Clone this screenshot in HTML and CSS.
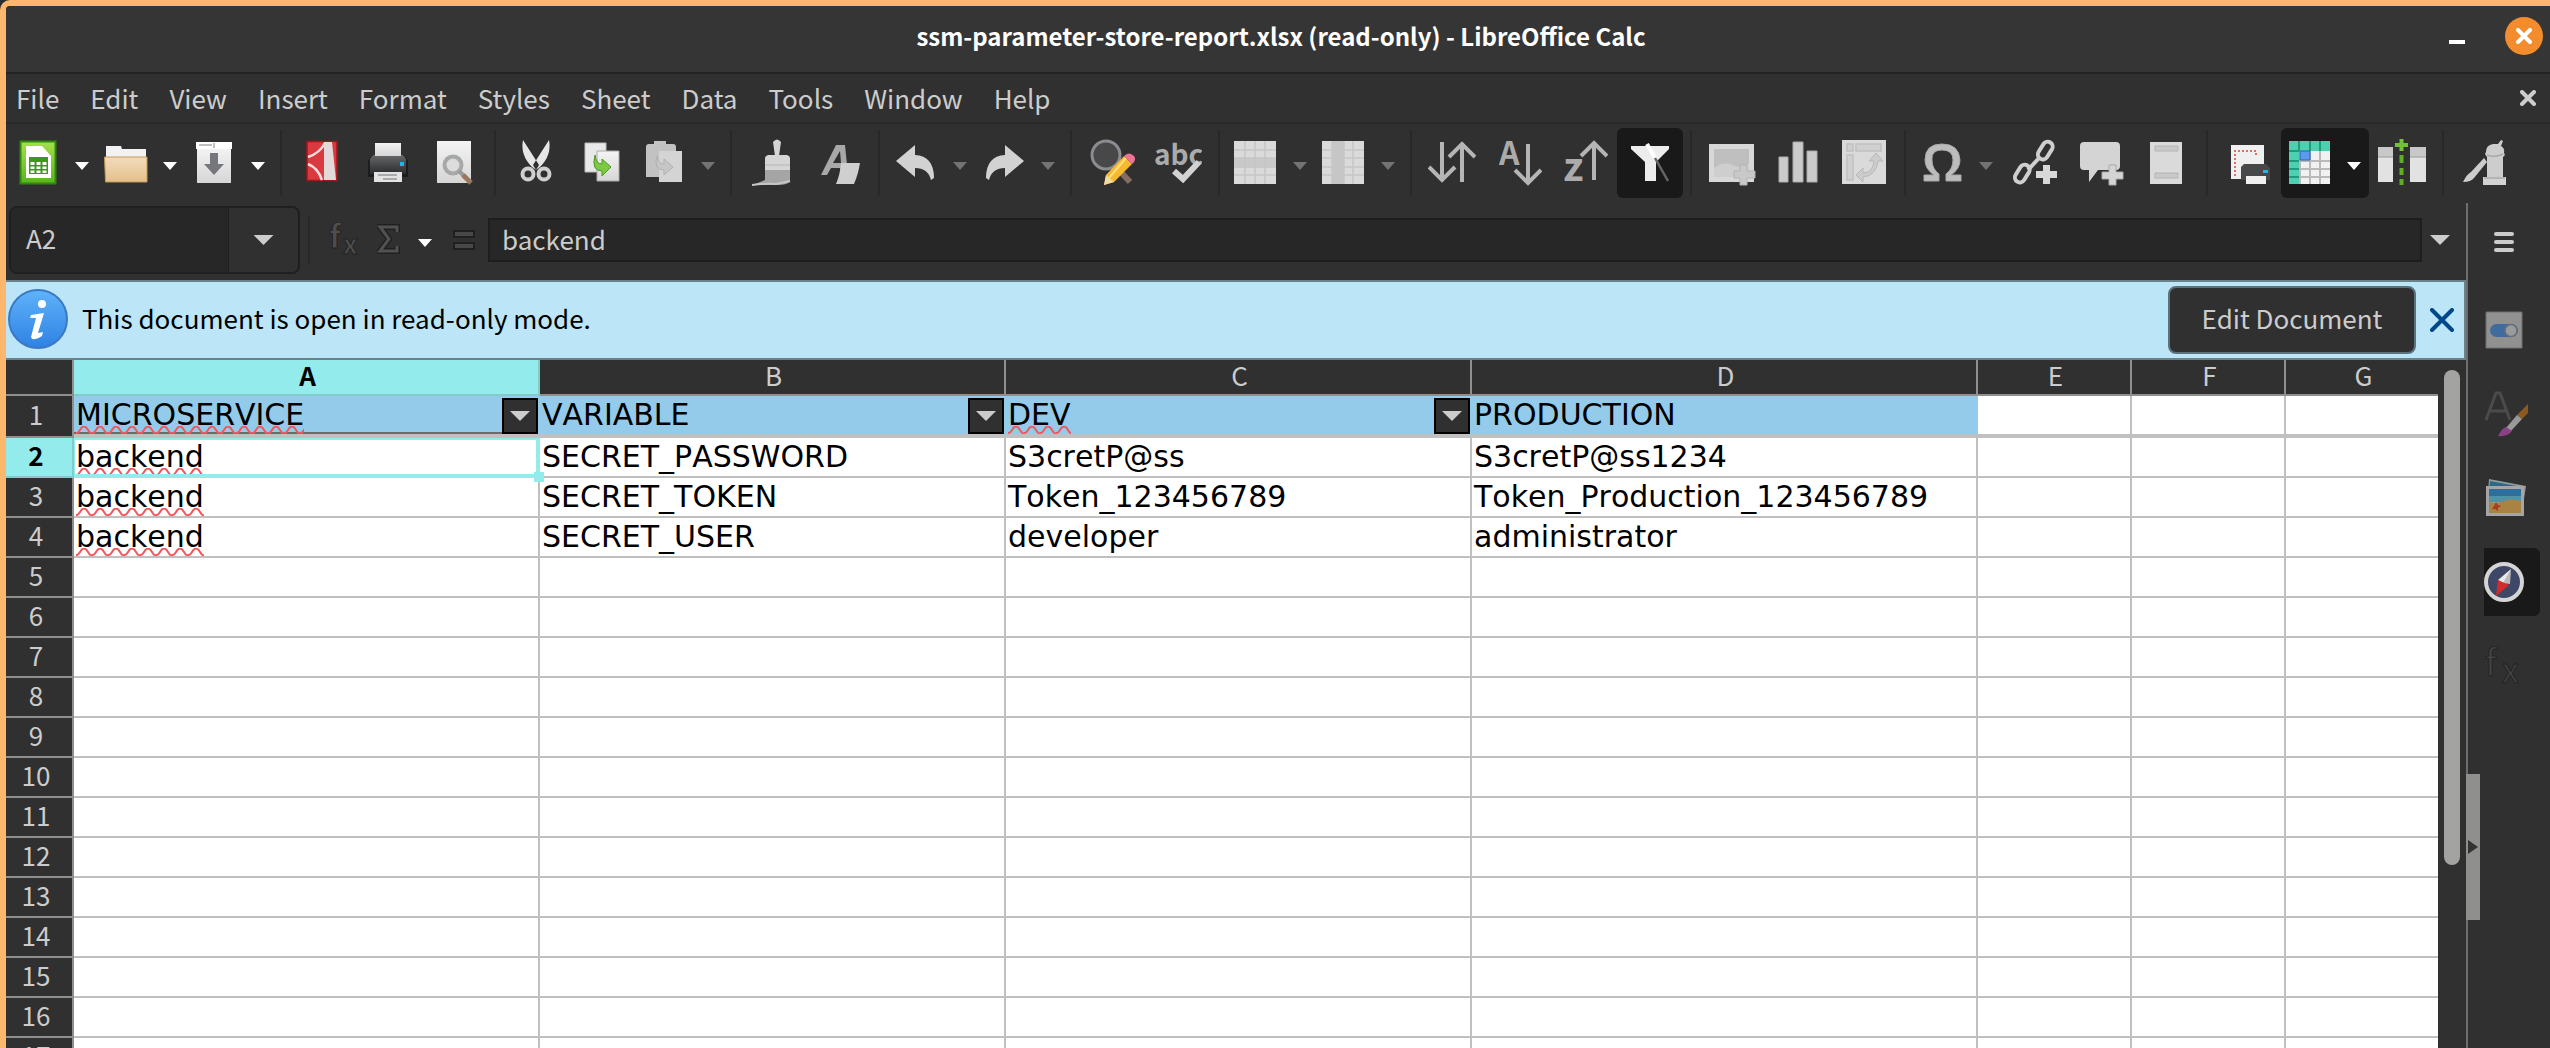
FILE: index.html
```html
<!DOCTYPE html>
<html lang="en">
<head>
<meta charset="utf-8">
<title>ssm-parameter-store-report.xlsx (read-only) - LibreOffice Calc</title>
<link rel="stylesheet" href="styles.css">
</head>
<body>
<svg class="defs" width="0" height="0" aria-hidden="true">
  <defs>
    <linearGradient id="paper" x1="0" y1="0" x2="0" y2="1"><stop offset="0" stop-color="#f4f4f4"/><stop offset="1" stop-color="#d6d6d6"/></linearGradient>
    <linearGradient id="green" x1="0" y1="0" x2="0" y2="1"><stop offset="0" stop-color="#a5e04c"/><stop offset="1" stop-color="#57b51c"/></linearGradient>
    <linearGradient id="tan" x1="0" y1="0" x2="0" y2="1"><stop offset="0" stop-color="#f2dcbc"/><stop offset="1" stop-color="#e4c08b"/></linearGradient>
    <linearGradient id="blue" x1="0" y1="0" x2="0" y2="1"><stop offset="0" stop-color="#5fb2fb"/><stop offset="1" stop-color="#2f82e2"/></linearGradient>
    <linearGradient id="dark" x1="0" y1="0" x2="0" y2="1"><stop offset="0" stop-color="#66686a"/><stop offset="1" stop-color="#2a2b2c"/></linearGradient>
  </defs>
</svg>
<div class="window">
  <header class="titlebar">
    <h1>ssm-parameter-store-report.xlsx (read-only) - LibreOffice Calc</h1>
    <div class="window-buttons">
      <button class="minimize" aria-label="Minimize"><svg width="16" height="20"><path d="M0 14H16V18H0z" fill="#fff"/></svg></button>
      <button class="close" aria-label="Close"><svg width="16" height="16"><path d="M2 2 14 14M14 2 2 14" stroke="#fff" stroke-width="4" stroke-linecap="round"/></svg></button>
    </div>
  </header>

  <nav class="menubar">
    <button>File</button><button>Edit</button><button>View</button><button>Insert</button><button>Format</button><button>Styles</button><button>Sheet</button><button>Data</button><button>Tools</button><button>Window</button><button>Help</button>
    <button class="close-doc" aria-label="Close document"><svg width="16" height="16"><path d="M2 2 14 14M14 2 2 14" stroke="#ccc" stroke-width="4" stroke-linecap="round"/></svg></button>
  </nav>

  <div class="toolbar" role="toolbar" aria-label="Standard">
    <div class="split"><button class="tool" aria-label="New"><svg viewBox="0 0 48 48"><path d="M6.500 2.500H41.500V44.500H6.500z" fill="url(#green)" stroke="#2f8a0c" stroke-width="2"/><path d="M12 7H28L37 17V39H12z" fill="#fff"/><path d="M15 18H34V35H15z" fill="#3a9a18"/><path d="M16.500 23H20.500V26H16.500zM22.500 23H26.500V26H22.500zM28.500 23H32.500V26H28.500zM16.500 27.500H20.500V30H16.500zM22.500 27.500H26.500V30H22.500zM28.500 27.500H32.500V30H28.500zM16.500 31.500H20.500V34H16.500zM22.500 31.500H26.500V34H22.500zM28.500 31.500H32.500V34H28.500z" fill="#fff"/></svg></button><button class="drop" aria-label="New options"></button></div>
    <div class="split"><button class="tool" aria-label="Open"><svg viewBox="0 0 48 48"><path d="M4 7H19L20 10H44V22H4z" fill="#f2f2f4"/><path d="M2.500 18H45V43H3.500z" fill="url(#tan)" stroke="#c29858"/></svg></button><button class="drop" aria-label="Open options"></button></div>
    <div class="split"><button class="tool" aria-label="Save"><svg viewBox="0 0 48 48"><path d="M7 8H41V44H7z" fill="url(#paper)"/><path d="M6 3H42V10H6z" fill="#fff"/><path d="M9 6H22M24 4V9" stroke="#aaa" stroke-width="1.500"/><path d="M20 14H28V25H34L24 36 14 25H20z" fill="#75777d"/></svg></button><button class="drop" aria-label="Save options"></button></div>
    <i class="sep"></i>
    <button class="tool" aria-label="Export as PDF"><svg viewBox="0 0 48 48"><path d="M9 2.500H39V41.500H9z" fill="#d93a40" stroke="#a3151b" stroke-width="1.500"/><path d="M26 3H34L38 41H26z" fill="#e4d9d9"/><path d="M10 18Q22 14 27 4M10 25Q20 29 24 41" fill="none" stroke="#f4dcdc" stroke-width="2.500"/></svg></button>
    <button class="tool" aria-label="Print"><svg viewBox="0 0 48 48"><path d="M4 22 8 16H40L44 22V38H4z" fill="#1c1d1e"/><path d="M6 20 9 16H39L42 20V35H6z" fill="url(#dark)"/><path d="M11 4H37V17H11z" fill="url(#paper)"/><path d="M10 33H38V43H10z" fill="#e3e3e3"/><path d="M14 36H33M19 40H33" stroke="#aaa" stroke-width="2"/><path d="M36 23H40V27H36z" fill="#1bb4f5"/></svg></button>
    <button class="tool" aria-label="Print preview"><svg viewBox="0 0 48 48"><path d="M7 2H41V44H7z" fill="url(#paper)"/><circle cx="23" cy="26" r="8.500" fill="#dcdcdc" stroke="#a6a8aa" stroke-width="4"/><path d="M29 32 34 37" stroke="#9a9a9a" stroke-width="4"/><path d="M33 36 41 44" stroke="#9b7761" stroke-width="5"/></svg></button>
    <i class="sep"></i>
    <button class="tool" aria-label="Cut"><svg viewBox="0 0 48 48"><path d="M11 1 27 26 24 31 20 28Q8 16 11 1zM37 1 21 26 24 31 28 28Q40 16 37 1z" fill="#e6e6e6"/><circle cx="16" cy="35" r="5.500" fill="none" stroke="#cfcfcf" stroke-width="4"/><circle cx="32" cy="35" r="5.500" fill="none" stroke="#cfcfcf" stroke-width="4"/></svg></button>
    <button class="tool" aria-label="Copy"><svg viewBox="0 0 48 48"><path d="M7 4H28V33H7z" fill="#e8e8e8" stroke="#bbb"/><path d="M19 12H41V42H19z" fill="url(#paper)" stroke="#aaa"/><path d="M17 16Q13 32 24 32V37L33 28 24 20V25Q18 25 17 16z" fill="#7ec944" stroke="#4f9a22"/></svg></button>
    <div class="split"><button class="tool" aria-label="Paste"><svg viewBox="0 0 48 48"><path d="M6 8Q6 5 9 5H14V2H26V5H33Q36 5 36 8V38H6z" fill="#c2c2c2"/><path d="M19 12H42V43H19z" fill="#d4d4d4"/><path d="M17 17Q13 31 24 31V36L33 28 24 20V25Q18 25 17 17z" fill="#c6c6c6" stroke="#b0b0b0"/></svg></button><button class="drop off" aria-label="Paste options"></button></div>
    <i class="sep"></i>
    <button class="tool" aria-label="Clone formatting"><svg viewBox="0 0 48 48"><path d="M25 3Q29-2 33 3L31 17H27zM17 19Q17 17 20 16H39Q42 17 42 19V31H17z" fill="#d5d5d5"/><path d="M17 31H42V43Q38 46 30 46H4Q12 43 17 41z" fill="#a5a5a5"/><path d="M17 26H42M4 46Q20 44 28 45L42 42" stroke="#c6c6c6" stroke-width="2" fill="none"/></svg></button>
    <button class="tool" aria-label="Clear formatting"><svg viewBox="0 0 48 48"><path d="M7 36 22 6H31L34 36H27L26 29H17L13 36zM19 24H27L26 12z" fill="#a8a8a8" fill-rule="evenodd"/><path d="M27 24H46Q44 36 40 45H22Q26 36 27 24z" fill="#cfcfcf"/></svg></button>
    <i class="sep"></i>
    <div class="split"><button class="tool" aria-label="Undo"><svg viewBox="0 0 48 48"><path d="M4 22 23 6V16Q42 17 42 39L39 41Q36 29 23 29V38z" fill="#d2d2d2"/></svg></button><button class="drop off" aria-label="Undo options"></button></div>
    <div class="split"><button class="tool" aria-label="Redo"><svg viewBox="0 0 48 48"><path d="M44 22 25 6V16Q6 17 6 39L9 41Q12 29 25 29V38z" fill="#d2d2d2"/></svg></button><button class="drop off" aria-label="Redo options"></button></div>
    <i class="sep"></i>
    <button class="tool" aria-label="Find and replace"><svg viewBox="0 0 48 48"><path d="M31 31 42 43" stroke="#846c60" stroke-width="6"/><circle cx="18" cy="16" r="14" fill="#484848" stroke="#8b8b92" stroke-width="3"/><path d="M36 17 44 25 26 43 16 46 18 36z" fill="#f7b92f"/><path d="M38 19 21 39" stroke="#ffe07c" stroke-width="2"/><path d="M36 17Q41 12 46 17 49 21 44 25z" fill="#ee7396"/><path d="M18 36 26 43 16 46z" fill="#f4d9a0"/></svg></button>
    <button class="tool" aria-label="Spelling"><svg viewBox="0 0 48 48"><text x="0" y="26" class="glyph abc">abc</text><path d="M20 32 29 40 45 23" fill="none" stroke="#d2d2d2" stroke-width="6"/></svg></button>
    <i class="sep"></i>
    <div class="split"><button class="tool" aria-label="Row"><svg viewBox="0 0 48 48"><path d="M2 2H44V45H2z" fill="#dadada"/><path d="M2 19H44V28H2z" fill="#c9c9c9"/><path d="M13 2V45M23 2V45M33 2V45M2 11H44M2 19H44M2 28H44M2 36H44" stroke="#c6c6c6" stroke-width="1.500"/></svg></button><button class="drop off" aria-label="Row options"></button></div>
    <div class="split"><button class="tool" aria-label="Column"><svg viewBox="0 0 48 48"><path d="M2 2H44V45H2z" fill="#dadada"/><path d="M12 2H24V45H12z" fill="#c6c6c6"/><path d="M12 2V45M24 2V45M33 2V45M2 11H44M2 19H44M2 28H44M2 36H44" stroke="#c6c6c6" stroke-width="1.500"/></svg></button><button class="drop off" aria-label="Column options"></button></div>
    <i class="sep"></i>
    <button class="tool" aria-label="Sort"><svg viewBox="0 0 48 48"><path d="M14 3V40M1 28 14 41 27 28M34 43V5M21 18 34 5 47 18" class="arrow"/></svg></button>
    <button class="tool" aria-label="Sort ascending"><svg viewBox="0 0 48 48"><text x="5" y="26" class="glyph letter">A</text><path d="M34 5V43M21 31 34 44 47 31" class="arrow"/></svg></button>
    <button class="tool" aria-label="Sort descending"><svg viewBox="0 0 48 48"><text x="3" y="42" class="glyph small-z">z</text><path d="M34 41V3M21 17 34 4 47 17" class="arrow"/></svg></button>
    <button class="tool active" aria-label="AutoFilter" aria-pressed="true"><svg viewBox="0 0 48 48"><path d="M5 7H43V10L30 23V42H19V23L5 10z" fill="#ececec"/><path d="M21 5 29 19" stroke="#fff" stroke-width="4"/><path d="M29 19 42 42" stroke="#666" stroke-width="2.500"/></svg></button>
    <i class="sep"></i>
    <button class="tool" aria-label="Insert image"><svg viewBox="0 0 48 48"><path d="M1 5H46V43H1z" fill="#d8d8d8"/><path d="M6 10H41V38H6z" fill="#bfbfbf"/><path d="M6 29Q16 22 24 26T41 25V38H6z" fill="#cecece"/><path d="M32 26H39V32H47V39H39V46H32V39H26V32H32z" fill="#c9c9c9" stroke="#b3b3b3"/></svg></button>
    <button class="tool" aria-label="Insert chart"><svg viewBox="0 0 48 48"><path d="M5 18H14V43H5zM19 3H29V43H19zM33 12H43V43H33z" fill="#cbcbcb" stroke="#aaa"/></svg></button>
    <button class="tool" aria-label="Pivot table"><svg viewBox="0 0 48 48"><path d="M2 1H46V45H2z" fill="#dadada"/><path d="M7 5H13V12H7zM16 5H41V12H16zM7 16H13V41H7z" fill="#d0d0d0" stroke="#c0c0c0" stroke-width="1.500"/><path d="M16 36 23 29V34Q33 34 34 22H29L36 14 43 22H38Q36 37 23 38V43z" fill="#cccccc" stroke="#b8b8b8"/></svg></button>
    <i class="sep"></i>
    <div class="split"><button class="tool" aria-label="Special character"><svg viewBox="0 0 48 48"><path d="M6 42V36H16Q7 30 7 21 7 5 24 5T42 21Q42 30 33 36H43V42H28V35Q35 30 35 21 35 11 24 11T14 21Q14 30 21 35V42z" fill="#bcbcbc" stroke="#a8a8a8"/></svg></button><button class="drop off" aria-label="Special character options"></button></div>
    <button class="tool" aria-label="Insert hyperlink"><svg viewBox="0 0 48 48"><g fill="none" stroke="#cfcfcf" stroke-width="4"><rect x="30" y="2" width="10" height="19" rx="5" transform="rotate(32 35 12)"/><rect x="7" y="25" width="10" height="19" rx="5" transform="rotate(32 12 35)"/><path d="M18 31 30 18"/></g><path d="M33 26H40V32H47V39H40V45H33V39H26V32H33z" fill="#d8d8d8"/></svg></button>
    <button class="tool" aria-label="Insert comment"><svg viewBox="0 0 48 48"><path d="M8 3H40Q44 3 44 7V27Q44 31 40 31H22L13 43V31H8Q4 31 4 27V7Q4 3 8 3z" fill="#d4d4d4"/><path d="M33 26H40V33H47V40H40V46H33V40H26V33H33z" fill="#d4d4d4" stroke="#aaa"/></svg></button>
    <button class="tool" aria-label="Headers and footers"><svg viewBox="0 0 48 48"><path d="M8 3H40V45H8z" fill="#dadada"/><path d="M13 7H36V12H13zM13 34H36V39H13z" fill="#c9c9c9" stroke="#b4b4b4"/></svg></button>
    <i class="sep"></i>
    <button class="tool" aria-label="Define print area"><svg viewBox="0 0 48 48"><path d="M7 6H40V40H7z" fill="#f0f0f0"/><path d="M11 37V12H32V16" fill="none" stroke="#e56a6a" stroke-width="2" stroke-dasharray="2 2"/><path d="M20 25H42L46 29V41H17V28z" fill="#46484a"/><path d="M24 17H40V25H24zM22 37H42V45H22z" fill="#f0f0f0"/><path d="M39 31H44V34H39z" fill="#1bb4f5"/></svg></button>
    <div class="split active"><button class="tool" aria-label="Freeze rows and columns" aria-pressed="true"><svg viewBox="0 0 48 48"><path d="M3 2H44V45H3z" fill="#f1f1f1"/><path d="M14 12V45M24 12V45M34 12V45M13 22H44M13 30H44M13 38H44" stroke="#b9b9b9" stroke-width="2"/><path d="M3 2H44V12H13V45H3z" fill="#4cd0b0"/><path d="M13 2V12M24 2V12M34 2V12M3 12H13M3 22H13M3 30H13M3 38H13" stroke="#229a7e" stroke-width="2"/><path d="M14 12H24V21H14z" fill="#5b9bee" stroke="#2c61b4"/></svg></button><button class="drop" aria-label="Freeze options"></button></div>
    <button class="tool" aria-label="Split window"><svg viewBox="0 0 48 48"><path d="M0 8H15V43H0zM32 8H48V43H32z" fill="#e2e2e2"/><path d="M0 8H15V18H0zM32 8H48V18H32z" fill="#c8c8c8"/><path d="M0 18H15M32 18H48" stroke="#9c9c9c"/><path d="M23.500 0V12M17 6H30" stroke="#73c233" stroke-width="4"/><path d="M23.500 16V24M23.500 29V36M23.500 40V46" stroke="#5fb024" stroke-width="4"/></svg></button>
    <i class="sep"></i>
    <button class="tool" aria-label="Show draw functions"><svg viewBox="0 0 48 48"><path d="M26 13Q26 6 33 5L38 5 41 1 43 2 41 7Q45 9 44 14 46 16 43 18V38H27V18Q24 15 26 13z" fill="#cdcdcd"/><path d="M24 19 27 23 14 39Q11 43 3 43 7 35 11 33z" fill="#cdcdcd"/><path d="M23 38H46V46H23z" fill="#d2d2d2"/><path d="M27 16Q35 19 43 15M24 39H45" fill="none" stroke="#aaa" stroke-width="1.500"/></svg></button>
  </div>

  <div class="workspace">
    <main class="document">
      <div class="formula-bar">
        <div class="name-box"><input type="text" value="A2" aria-label="Name box"><button aria-label="Choose name"><i class="down"></i></button></div>
        <i class="rule"></i>
        <button class="fn wizard" aria-label="Function wizard"><svg width="32" height="36"><text x="1" y="26" class="fx">f</text><text x="15" y="32" class="fx sub">x</text></svg></button>
        <button class="fn sum" aria-label="Select function"><svg width="24" height="36"><path d="M20 10V5H3L12 17 3 29H20V24" fill="none" stroke="#202020" stroke-width="6"/><path d="M20 10V5H3L12 17 3 29H20V24" fill="none" stroke="#515151" stroke-width="3"/></svg></button>
        <button class="drop" aria-label="Function options"></button>
        <button class="fn equals" aria-label="Formula"><svg width="22" height="22"><path d="M1 2H21V8H1zM1 14H21V20H1z" fill="#484848" stroke="#202020" stroke-width="2"/></svg></button>
        <input class="formula" type="text" value="backend" aria-label="Input line">
        <button class="expand" aria-label="Expand formula bar"><i class="down"></i></button>
      </div>

      <div class="infobar" role="status">
        <svg class="info" viewBox="0 0 60 62"><ellipse cx="30" cy="30" rx="29" ry="29" fill="url(#blue)" stroke="#3b79c4" stroke-width="2"/><circle cx="34" cy="15" r="4" fill="#fff"/><path d="M23 26 36 24 30 44 35 43 34 47Q24 53 23 48L28 29 22 29z" fill="#fff"/></svg>
        <p>This document is open in read-only mode.</p>
        <button class="edit">Edit Document</button>
        <button class="dismiss" aria-label="Close infobar"><svg width="24" height="24"><path d="M2 2 22 22M22 2 2 22" stroke="#00488c" stroke-width="4" stroke-linecap="round"/></svg></button>
      </div>

      <div class="grid">
        <div class="sheet">
          <table>
            <colgroup><col class="w-num"><col class="w-wide"><col class="w-wide"><col class="w-wide"><col class="w-prod"><col class="w-std"><col class="w-std"><col class="w-std"></colgroup>
            <thead>
              <tr><th></th><th class="current">A</th><th>B</th><th>C</th><th>D</th><th>E</th><th>F</th><th>G</th></tr>
            </thead>
            <tbody>
              <tr class="heading"><th>1</th><td class="selected-col"><span class="typo">MICROSERVICE</span><button class="filter" aria-label="Filter MICROSERVICE"></button></td><td>VARIABLE<button class="filter" aria-label="Filter VARIABLE"></button></td><td><span class="typo">DEV</span><button class="filter" aria-label="Filter DEV"></button></td><td>PRODUCTION</td><td></td><td></td><td></td></tr>
              <tr><th class="current">2</th><td class="cursor"><span class="typo">backend</span></td><td>SECRET_PASSWORD</td><td>S3cretP@ss</td><td>S3cretP@ss1234</td><td></td><td></td><td></td></tr>
              <tr><th>3</th><td><span class="typo">backend</span></td><td>SECRET_TOKEN</td><td>Token_123456789</td><td>Token_Production_123456789</td><td></td><td></td><td></td></tr>
              <tr><th>4</th><td><span class="typo">backend</span></td><td>SECRET_USER</td><td>developer</td><td>administrator</td><td></td><td></td><td></td></tr>
              <tr><th>5</th><td></td><td></td><td></td><td></td><td></td><td></td><td></td></tr>
              <tr><th>6</th><td></td><td></td><td></td><td></td><td></td><td></td><td></td></tr>
              <tr><th>7</th><td></td><td></td><td></td><td></td><td></td><td></td><td></td></tr>
              <tr><th>8</th><td></td><td></td><td></td><td></td><td></td><td></td><td></td></tr>
              <tr><th>9</th><td></td><td></td><td></td><td></td><td></td><td></td><td></td></tr>
              <tr><th>10</th><td></td><td></td><td></td><td></td><td></td><td></td><td></td></tr>
              <tr><th>11</th><td></td><td></td><td></td><td></td><td></td><td></td><td></td></tr>
              <tr><th>12</th><td></td><td></td><td></td><td></td><td></td><td></td><td></td></tr>
              <tr><th>13</th><td></td><td></td><td></td><td></td><td></td><td></td><td></td></tr>
              <tr><th>14</th><td></td><td></td><td></td><td></td><td></td><td></td><td></td></tr>
              <tr><th>15</th><td></td><td></td><td></td><td></td><td></td><td></td><td></td></tr>
              <tr><th>16</th><td></td><td></td><td></td><td></td><td></td><td></td><td></td></tr>
              <tr><th>17</th><td></td><td></td><td></td><td></td><td></td><td></td><td></td></tr>
            </tbody>
          </table>
        </div>
        <div class="scrollbar"><div class="thumb"></div></div>
      </div>
    </main>

    <aside class="sidebar">
      <button class="collapse" aria-label="Hide sidebar"><svg width="10" height="14"><path d="M0 0 10 7 0 14z" fill="#333"/></svg></button>
      <button class="hamburger" aria-label="Sidebar settings"><svg width="20" height="20"><path d="M2 2H18M2 10H18M2 18H18" stroke="#ccc" stroke-width="4" stroke-linecap="round"/></svg></button>
      <button class="tab" aria-label="Properties"><svg viewBox="0 0 44 48"><path d="M2 6H38V42H2z" fill="#919191" stroke="#6e6e6e"/><rect x="6" y="18" width="28" height="13" rx="6.500" fill="#3f6b9d"/><circle cx="27" cy="24.500" r="6" fill="#9b9b9b" stroke="#65707a" stroke-width="1.500"/></svg></button>
      <button class="tab" aria-label="Styles"><svg viewBox="0 0 44 48"><path d="M2 30 12 3H16L26 30M6 21H22" fill="none" stroke="#4b4b4b" stroke-width="3"/><path d="M44 14V23L38 29 33 25z" fill="#8a5a20"/><path d="M33 25 38 29 27 41 22 38z" fill="#999"/><path d="M22 37 28 41Q24 47 14 46 18 38 22 37z" fill="#8b4284"/></svg></button>
      <button class="tab" aria-label="Gallery"><svg viewBox="0 0 44 48"><path d="M5 5 42 12 38 38 3 32z" fill="#999"/><path d="M6 7 38 13V20H5z" fill="#286b86"/><path d="M2 12H40V42H2z" fill="#a5a5a5"/><path d="M5 15H37V28H5z" fill="#2c6f9c"/><path d="M5 22H37V28H5z" fill="#4e93a8"/><path d="M5 28Q14 30 20 27T37 27V39H5z" fill="#a98343"/><path d="M12 28 14 31 17 32 14 34 14 37 11 35 8 35 10 32z" fill="#a93c22"/></svg></button>
      <button class="tab active" aria-label="Navigator" aria-pressed="true"><svg viewBox="0 0 44 48"><circle cx="20" cy="24" r="18" fill="#3e4866" stroke="#d5d5d5" stroke-width="4"/><path d="M27 11 14 22 21 27z" fill="#e9e9e9"/><path d="M27 11 26 26 19 25z" fill="#b9b9b9"/><path d="M12 38 14 22 25 27z" fill="#d32a2a"/></svg></button>
      <button class="tab" aria-label="Functions"><svg viewBox="0 0 44 48"><text x="1" y="34" class="fx side">f</text><text x="18" y="41" class="fx side sub">x</text></svg></button>
    </aside>
  </div>
</div>
</body>
</html>
```
FILE: styles.css
```css
:root {
  --ui: "Noto Sans CJK SC", "Noto Sans", sans-serif;
  --chrome: #303030;
  --line: #282828;
  --text: #cccccc;
  --accent: #94ebeb;
  --grid: #c0c0c0;
}

* { box-sizing: border-box; }

body {
  margin: 0;
  background: #2b2b33;
  color: var(--text);
  font: 26px/38px var(--ui);
}

button, input {
  margin: 0;
  padding: 0;
  border: 0;
  background: none;
  color: inherit;
  font: inherit;
}

button {
  display: flex;
  align-items: center;
  justify-content: center;
  flex: none;
}

.defs { position: absolute; }

.window {
  display: flex;
  flex-direction: column;
  height: 100vh;
  overflow: hidden;
  border: solid #fdb76c;
  border-width: 6px 0 0 6px;
  border-top-left-radius: 10px;
  background: var(--chrome);
}

/* Title bar */
.titlebar {
  display: grid;
  grid-template-columns: 1fr auto 1fr;
  align-items: center;
  flex: none;
  height: 68px;
  padding-bottom: 6px;
  background: #353535;
  border-bottom: 2px solid #232323;
}

.titlebar h1 {
  grid-column: 2;
  margin: 0;
  padding-left: 6px;
  color: #fff;
  font: bold 24px/38px var(--ui);
}

.window-buttons {
  display: flex;
  justify-content: flex-end;
  align-items: center;
  gap: 40px;
  padding-right: 7px;
}

.close {
  width: 38px;
  height: 38px;
  border-radius: 50%;
  background: #f28c2c;
}

/* Menus */
.menubar {
  display: flex;
  flex: none;
  align-items: center;
  height: 50px;
  padding: 0 14px 1px 0;
  border-bottom: 2px solid var(--line);
}

.menubar button {
  padding: 0 15px;
  margin-left: 1px;
}

.menubar button:first-child { padding-left: 9px; }

.menubar .close-doc {
  margin-left: auto;
  padding: 0;
}

/* Toolbar */
.toolbar {
  display: flex;
  flex: none;
  align-items: center;
  height: 79px;
  padding: 0 3px 1px;
}

.tool {
  width: 66px;
  height: 70px;
}

.tool svg {
  width: 48px;
  height: 48px;
}

.split { display: flex; }
.split .tool { width: 58px; }

.active {
  border-radius: 6px;
  background: #191919;
}

.drop {
  width: 30px;
  height: 70px;
}

.drop::before, .down {
  content: "";
  display: block;
  width: 14px;
  height: 8px;
  background: #fff;
  clip-path: polygon(0 0, 100% 0, 50% 100%);
}

.drop::before { margin-top: 6px; }
.drop.off::before { background: #737373; }

.down {
  width: 20px;
  height: 10px;
  background: var(--text);
}

.sep {
  width: 2px;
  height: 66px;
  margin: 0 7px;
  background: var(--line);
}

.glyph {
  fill: #ababab;
  font-family: var(--ui);
  font-weight: bold;
}

.abc { font-size: 28px; }
.letter { font-size: 32px; }
.small-z { font-size: 40px; }

.arrow {
  fill: none;
  stroke: #b5b5b5;
  stroke-width: 4;
}

/* Document and sidebar */
.workspace {
  display: flex;
  flex: 1;
  min-height: 0;
}

.document {
  display: flex;
  flex-direction: column;
  flex: 1;
  min-width: 0;
}

/* Formula bar */
.formula-bar {
  display: flex;
  flex: none;
  align-items: center;
  height: 77px;
  padding: 0 14px 3px 3px;
}

.name-box {
  display: flex;
  width: 291px;
  height: 68px;
  border: 2px solid #1f1f1f;
  border-radius: 8px;
  overflow: hidden;
}

.name-box input {
  flex: 1;
  min-width: 0;
  padding: 0 0 4px 15px;
  background: #272727;
  border-right: 1px solid #1f1f1f;
}

.name-box button { width: 69px; }

.rule {
  width: 2px;
  height: 50px;
  margin: 0 18px 0 8px;
  background: var(--line);
}

.fn { height: 50px; }
.sum { margin-left: 17px; }
.equals { margin: 0 13px; }
.formula-bar .drop { margin-left: 9px; }

.fx {
  fill: #4d4d4d;
  stroke: #232323;
  stroke-width: 1px;
  font: bold 32px var(--ui);
}

.fx.sub { font-size: 26px; }
.fx.side { fill: #444; font-size: 36px; font-weight: normal; }
.fx.side.sub { font-size: 34px; }

.formula {
  flex: 1;
  min-width: 0;
  height: 44px;
  padding: 0 12px 4px;
  background: #272727;
  border: 2px solid #1e1e1e;
}

.expand {
  width: 36px;
  height: 44px;
  margin-right: -6px;
}

/* Read-only notice */
.infobar {
  display: flex;
  flex: none;
  align-items: center;
  height: 80px;
  padding-right: 10px;
  border: solid #6b828b;
  border-width: 2px 2px 2px 0;
  background: #bce5f7;
  color: #000;
}

.info {
  width: 60px;
  height: 62px;
  margin: 0 14px 0 2px;
}

.infobar p {
  flex: 1;
  margin: 0;
  padding-bottom: 4px;
}

.edit {
  width: 248px;
  height: 68px;
  padding-bottom: 4px;
  border: 2px solid #5c727b;
  border-radius: 8px;
  background: var(--chrome);
  color: var(--text);
}

.dismiss {
  width: 24px;
  height: 24px;
  margin-left: 14px;
}

/* Cells */
.grid {
  display: flex;
  flex: 1;
  min-height: 0;
}

.sheet {
  flex: 1;
  min-width: 0;
  overflow: hidden;
  background: #fff;
}

table {
  width: 2434px;
  table-layout: fixed;
  border-spacing: 0;
  color: #000;
  font: 30px/38px "DejaVu Sans", sans-serif;
  font-kerning: none;
}

.w-num { width: 68px; }
.w-wide { width: 466px; }
.w-prod { width: 506px; }
.w-std { width: 154px; }

th {
  height: 40px;
  padding: 0 6px 4px 0;
  border: solid #8f8f8e;
  border-width: 0 2px 2px 0;
  background: var(--chrome);
  color: var(--text);
  font: 26px/34px var(--ui);
}

thead th {
  height: 36px;
  padding: 0 0 4px 3px;
  line-height: 30px;
}

th.current {
  border-color: #85caca;
  background: var(--accent);
  color: #000;
  font-weight: bold;
}

td {
  position: relative;
  height: 40px;
  padding: 0 2px;
  border: solid var(--grid);
  border-width: 0 2px 2px 0;
  white-space: nowrap;
}

.heading th, .heading td { height: 42px; }

.heading td { border-bottom-width: 4px; }

.heading td:nth-child(-n+5) {
  border-right-color: #94cbea;
  background: #94cbea;
}

.heading .selected-col { box-shadow: inset 0 -2px #6b6b6b; }

.typo {
  display: inline-block;
  vertical-align: top;
  background: url("data:image/svg+xml,%3Csvg xmlns='http://www.w3.org/2000/svg' width='16' height='8'%3E%3Cpath d='M-4 2Q0 11 4 4T12 4T20 4' fill='none' stroke='%23f4565c' stroke-width='2'/%3E%3C/svg%3E") 0 100% / 16px 8px repeat-x;
}

.filter {
  position: absolute;
  top: 2px;
  right: 0;
  width: 36px;
  height: 36px;
  border: 2px solid #000;
  background: var(--chrome);
}

.filter::before {
  content: "";
  width: 20px;
  height: 10px;
  background: var(--text);
  clip-path: polygon(0 0, 100% 0, 50% 100%);
}

.cursor::before {
  content: "";
  position: absolute;
  inset: 0 -2px -2px 0;
  border: solid var(--accent);
  border-width: 2px 4px 4px 1px;
}

.cursor::after {
  content: "";
  position: absolute;
  z-index: 1;
  right: -6px;
  bottom: -6px;
  width: 10px;
  height: 10px;
  background: var(--accent);
}

.scrollbar {
  width: 28px;
  padding: 10px 6px 0;
  flex: none;
}

.thumb {
  height: 73%;
  border-radius: 8px;
  background: #a3a3a1;
}

/* Sidebar */
.sidebar {
  position: relative;
  display: flex;
  flex: none;
  flex-direction: column;
  width: 84px;
  padding: 21px 10px 0 16px;
  border-left: 2px solid #6d6d6d;
}

.hamburger {
  width: 40px;
  height: 36px;
  margin-bottom: 36px;
}

.tab {
  width: 56px;
  height: 68px;
  margin-bottom: 16px;
  justify-content: flex-start;
}

.tab svg {
  width: 44px;
  height: 48px;
}

.tab.active { border-radius: 0 6px 6px 0; }

.collapse {
  position: absolute;
  left: -2px;
  top: 571px;
  width: 14px;
  height: 146px;
  background: #8f8f8d;
}
```
